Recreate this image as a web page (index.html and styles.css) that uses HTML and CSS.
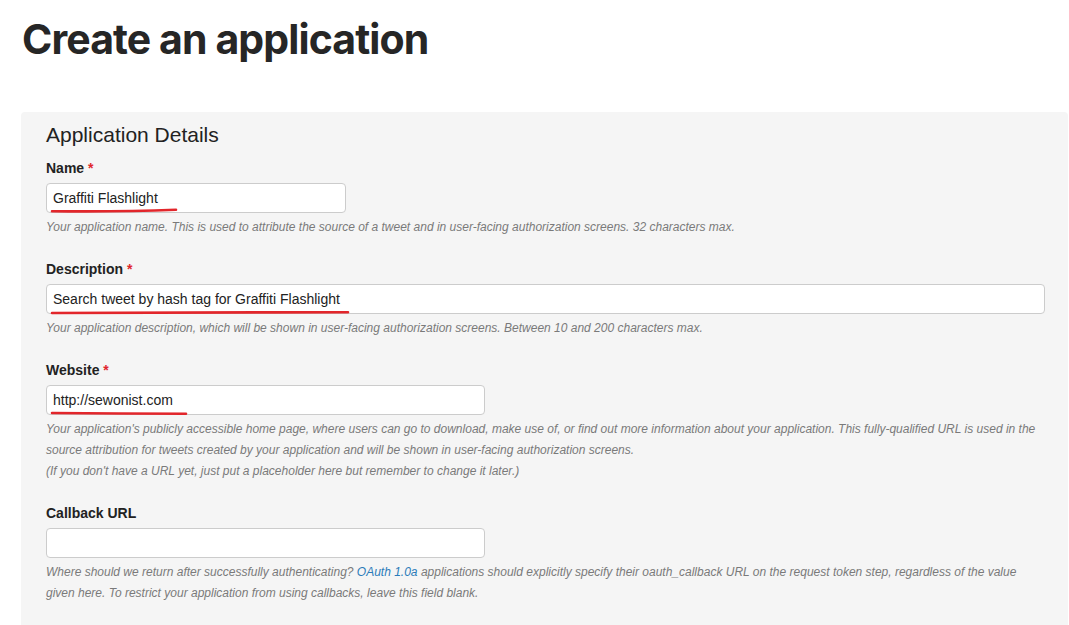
FILE: index.html
```html
<!DOCTYPE html>
<html lang="en">
<head>
<meta charset="utf-8">
<title>Create an application</title>
<link rel="stylesheet" href="styles.css">
</head>
<body>
<h1 class="page-title">Create an application</h1>
<section class="panel">
  <h2 class="panel-title">Application Details</h2>

  <div class="field">
    <label class="label">Name <span class="req">*</span></label>
    <div class="input-wrap w-sm">
      <div class="input">Graffiti Flashlight</div>
      <svg class="mark" style="width:130px" viewBox="0 0 130 6" preserveAspectRatio="none"><path d="M3 4.2 C 40 4.6, 90 4.2, 127 2.8" /></svg>
    </div>
    <p class="help">Your application name. This is used to attribute the source of a tweet and in user-facing authorization screens. 32 characters max.</p>
  </div>

  <div class="field">
    <label class="label">Description <span class="req">*</span></label>
    <div class="input-wrap w-full">
      <div class="input">Search tweet by hash tag for Graffiti Flashlight</div>
      <svg class="mark mark-desc" style="width:302px" viewBox="0 0 302 6" preserveAspectRatio="none"><path d="M3 4 C 100 3.6, 200 3.4, 299 3.2" /></svg>
    </div>
    <p class="help">Your application description, which will be shown in user-facing authorization screens. Between 10 and 200 characters max.</p>
  </div>

  <div class="field">
    <label class="label">Website <span class="req">*</span></label>
    <div class="input-wrap w-md">
      <div class="input">http://sewonist.com</div>
      <svg class="mark mark-web" style="width:140px" viewBox="0 0 140 6" preserveAspectRatio="none"><path d="M3 3 C 40 3.4, 100 3.6, 137 3.8" /></svg>
    </div>
    <p class="help">Your application's publicly accessible home page, where users can go to download, make use of, or find out more information about your application. This fully-qualified URL is used in the source attribution for tweets created by your application and will be shown in user-facing authorization screens.<br>(If you don't have a URL yet, just put a placeholder here but remember to change it later.)</p>
  </div>

  <div class="field">
    <label class="label">Callback URL</label>
    <div class="input-wrap w-md">
      <div class="input"></div>
    </div>
    <p class="help">Where should we return after successfully authenticating? <a class="link" href="#">OAuth 1.0a</a> applications should explicitly specify their oauth_callback URL on the request token step, regardless of the value given here. To restrict your application from using callbacks, leave this field blank.</p>
  </div>
</section>
</body>
</html>
```

FILE: styles.css
```css
html, body {
  margin: 0;
  padding: 0;
  background: #ffffff;
}

body {
  font-family: "Liberation Sans", Arial, sans-serif;
  color: #333333;
  overflow: hidden;
}

.page-title {
  margin: 0;
  padding: 12px 0 0 22px;
  height: 100px;
  box-sizing: border-box;
  font-family: "Inter", "Lato", sans-serif;
  font-weight: 700;
  font-size: 41px;
  line-height: 54px;
  letter-spacing: -0.9px;
  color: #262626;
}

.panel {
  margin: 12px 0 0 21px;
  width: 1047px;
  box-sizing: border-box;
  background: #f5f5f5;
  border-radius: 4px;
  padding: 11px 25px 40px 25px;
}

.panel-title {
  margin: 0 0 11px 0;
  font-size: 21px;
  line-height: 24px;
  font-weight: 400;
  color: #222222;
}

.field {
  margin-bottom: 21px;
}

.label {
  display: block;
  font-size: 14px;
  line-height: 20px;
  font-weight: 700;
  color: #222222;
  margin-bottom: 5px;
}

.req {
  color: #e0262c;
}

.input-wrap {
  position: relative;
}

.w-sm { width: 300px; }
.w-md { width: 439px; }
.w-full { width: 999px; }

.input {
  height: 30px;
  box-sizing: border-box;
  background: #ffffff;
  border: 1px solid #cccccc;
  border-radius: 4px;
  padding: 0 6px;
  font-size: 14px;
  line-height: 28px;
  color: #222222;
}

.mark {
  position: absolute;
  left: 3px;
  top: 24px;
  height: 6px;
  overflow: visible;
}

.mark-desc { top: 25px; }
.mark-web { top: 25px; }

.mark path {
  fill: none;
  stroke: #e2262b;
  stroke-width: 2.6;
  stroke-linecap: round;
}

.help {
  margin: 4px 0 0 0;
  font-size: 12px;
  line-height: 21px;
  font-style: italic;
  color: #7a7a7a;
}

.link {
  color: #2b7bb9;
  text-decoration: none;
}
```
